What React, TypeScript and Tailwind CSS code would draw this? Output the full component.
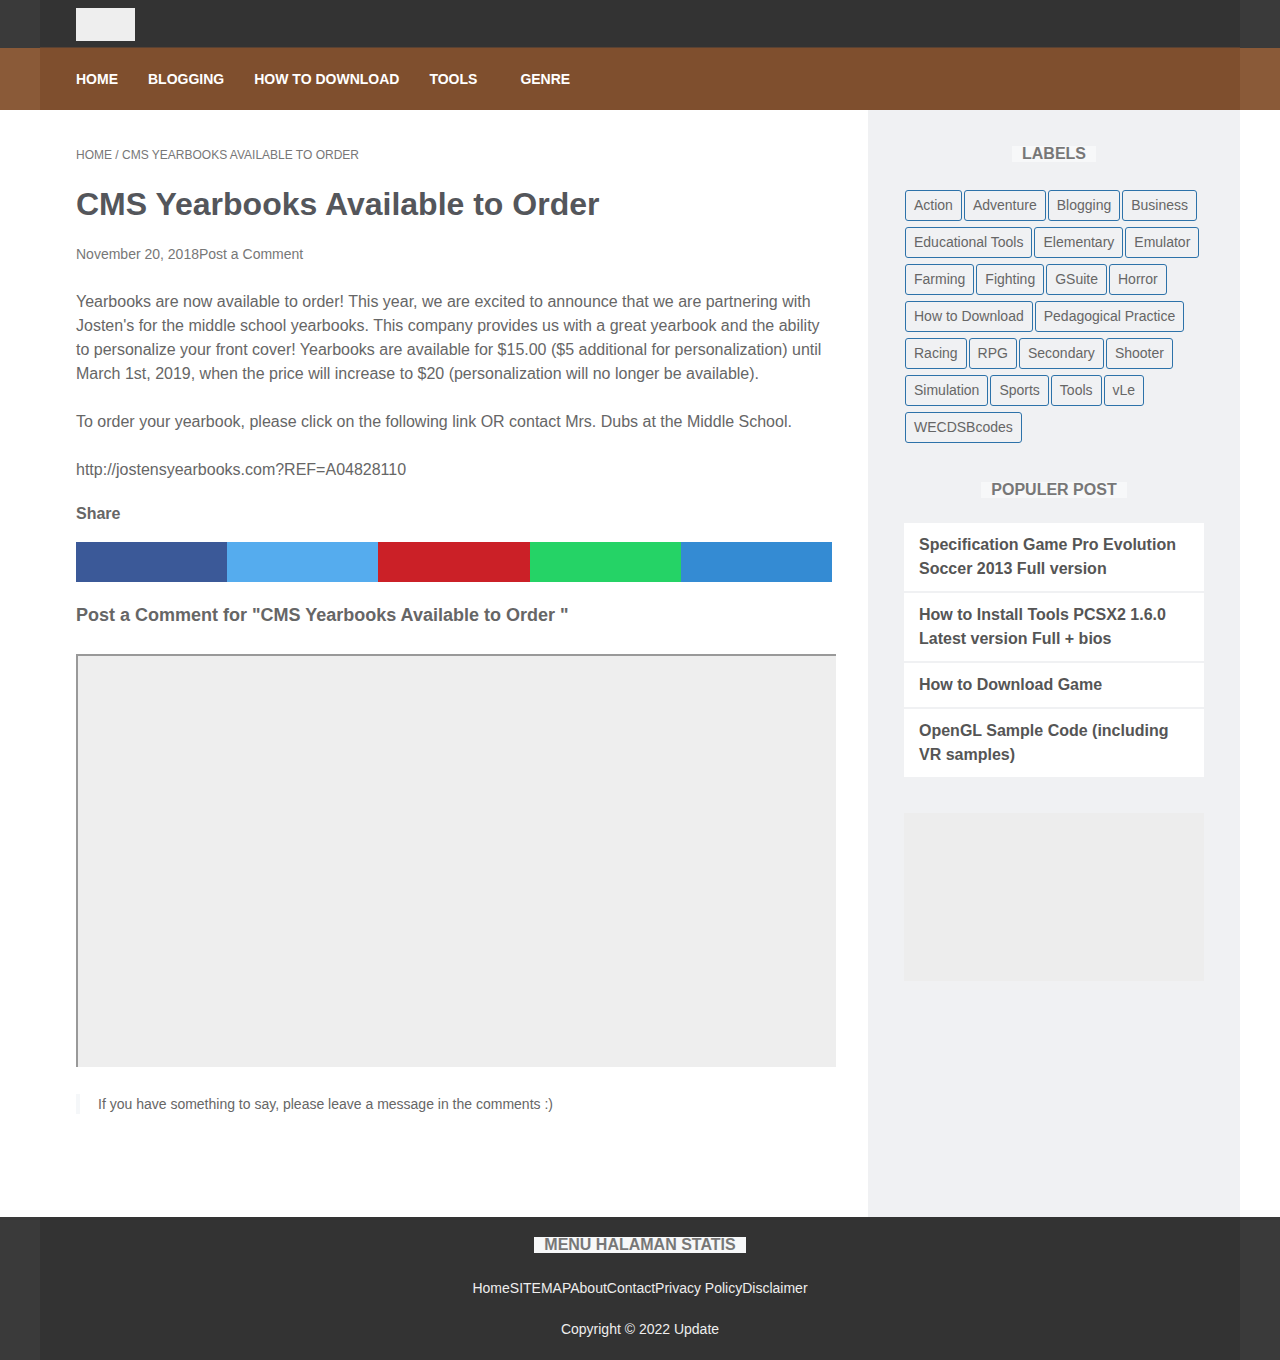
const NAV = ["Home", "Blogging", "How to Download", "Tools", "Genre"];

const LABELS = [
  "Action",
  "Adventure",
  "Blogging",
  "Business",
  "Educational Tools",
  "Elementary",
  "Emulator",
  "Farming",
  "Fighting",
  "GSuite",
  "Horror",
  "How to Download",
  "Pedagogical Practice",
  "Racing",
  "RPG",
  "Secondary",
  "Shooter",
  "Simulation",
  "Sports",
  "Tools",
  "vLe",
  "WECDSBcodes",
];

const POPULAR = [
  "Specification Game Pro Evolution Soccer 2013 Full version",
  "How to Install Tools PCSX2 1.6.0 Latest version Full + bios",
  "How to Download Game",
  "OpenGL Sample Code (including VR samples)",
];

const SHARE = ["bg-[#3b5998]", "bg-[#55acee]", "bg-[#cb2027]", "bg-[#25d366]", "bg-[#348bd3]"];

const FOOTER_LINKS = ["Home", "SITEMAP", "About", "Contact", "Privacy Policy", "Disclaimer"];

function WidgetTitle({ children }: { children: string }) {
  return (
    <div className="flex justify-center">
      <h2 className="bg-[#f7f8f9] px-[10px] text-[16px] leading-[16px] font-bold uppercase text-[#777]">
        {children}
      </h2>
    </div>
  );
}

export default function App() {
  return (
    <div className="w-[1280px] font-['Liberation_Sans',Arial,sans-serif]">
      {/* top bar */}
      <div className="bg-[#3a3a3a]">
        <div className="mx-10 h-12 bg-[#333] px-9 pt-2 border-b border-[#5a4233]">
          <div className="h-[33px] w-[59px] bg-[#eee]" />
        </div>
      </div>

      {/* nav */}
      <div className="bg-[#8a5a38]">
        <nav className="mx-10 flex h-[62px] items-center gap-[30px] bg-[#7f4f2e] px-9">
          {NAV.map((n) => (
            <a
              key={n}
              className={`text-[14px] font-bold uppercase text-white ${n === "Genre" ? "ml-[13px]" : ""}`}
            >
              {n}
            </a>
          ))}
        </nav>
      </div>

      {/* body */}
      <div className="mx-10 flex">
        <main className="w-[828px] bg-white px-9 pt-[38px] pb-[103px]">
          <div className="text-[12px] leading-[14px] uppercase text-[#777]">
            Home / CMS Yearbooks Available to Order
          </div>
          <h1 className="mt-[22px] text-[32px] leading-[40px] font-bold text-[#54565b]">
            CMS Yearbooks Available to Order
          </h1>
          <div className="mt-5 text-[14px] leading-5 text-[#777]">
            November 20, 2018<span>Post a Comment</span>
          </div>

          <div className="mt-[26px] text-[16px] leading-6 text-[#666]">
            <p>
              Yearbooks are now available to order! This year, we are excited to announce that we are partnering with
              Josten's for the middle school yearbooks. This company provides us with a great yearbook and the ability
              to personalize your front cover! Yearbooks are available for $15.00 ($5 additional for personalization)
              until March 1st, 2019, when the price will increase to $20 (personalization will no longer be
              available).
            </p>
            <p className="mt-6">
              To order your yearbook, please click on the following link OR contact Mrs. Dubs at the Middle School.
            </p>
            <p className="mt-6">http://jostensyearbooks.com?REF=A04828110</p>
          </div>

          <div className="mt-[22px] text-[16px] leading-5 font-bold text-[#666]">Share</div>
          <div className="mt-[18px] grid h-[40px] w-[756px] grid-cols-5">
            {SHARE.map((c) => (
              <div key={c} className={c} />
            ))}
          </div>

          <h3 className="mt-[21px] text-[18px] leading-6 font-bold text-[#666]">
            Post a Comment for "CMS Yearbooks Available to Order "
          </h3>

          <div className="mt-[27px] h-[413px] w-[760px] border-t-2 border-l-2 border-[#999] bg-[#eee]" />

          <div className="mt-[27px] border-l-4 border-[#f5f7f9] pl-[18px] text-[14px] leading-5 text-[#666]">
            If you have something to say, please leave a message in the comments :)
          </div>
        </main>

        <aside className="w-[372px] bg-[#f0f1f3] px-9 pt-9">
          <WidgetTitle>Labels</WidgetTitle>
          <div className="mt-[28px] flex flex-wrap gap-x-[2px] gap-y-[6px] pl-px">
            {LABELS.map((l) => (
              <a
                key={l}
                className="h-[31px] rounded-[3px] border border-[#2d72a9] px-2 text-[14px] leading-[29px] text-[#666]"
              >
                {l}
              </a>
            ))}
          </div>

          <div className="mt-[39px]">
            <WidgetTitle>Populer Post</WidgetTitle>
          </div>
          <div className="mt-[25px] flex flex-col gap-[2px]">
            {POPULAR.map((p) => (
              <div key={p} className="bg-white px-[15px] py-[10px] text-[16px] leading-6 font-bold text-[#555]">
                {p}
              </div>
            ))}
          </div>

          <div className="mt-9 h-[168px] bg-[#ededed]" />
        </aside>
      </div>

      {/* footer */}
      <div className="bg-[#3a3a3a]">
        <footer className="mx-10 bg-[#333] pt-5 pb-[21px] text-center">
          <WidgetTitle>Menu Halaman Statis</WidgetTitle>
          <div className="mt-[25px] text-[14px] leading-5 text-[#eee]">
            {FOOTER_LINKS.map((f) => (
              <a key={f}>{f}</a>
            ))}
          </div>
          <div className="mt-[21px] text-[14px] leading-5 text-[#eee]">Copyright © 2022 Update</div>
        </footer>
      </div>
    </div>
  );
}
